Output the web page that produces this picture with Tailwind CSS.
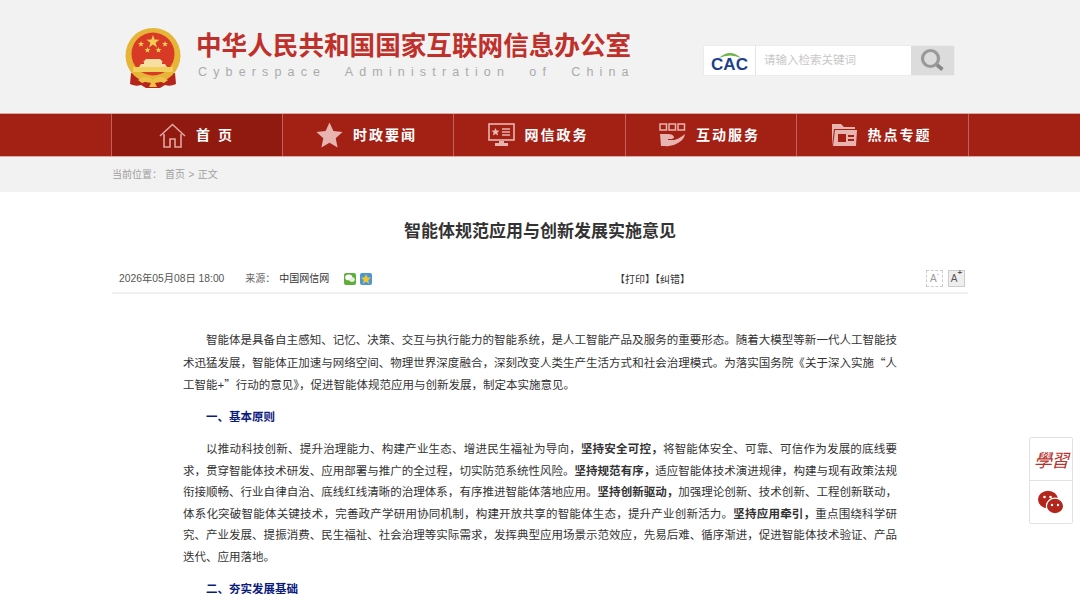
<!DOCTYPE html>
<html lang="zh-CN">
<head>
  <meta charset="UTF-8" />
  <title>智能体规范应用与创新发展实施意见</title>
  <script src="https://cdn.jsdelivr.net/npm/@tailwindcss/browser@4"></script>
</head>
<body class="relative h-[604px] overflow-hidden bg-white font-['Liberation_Sans','Noto_Sans_CJK_SC',sans-serif]">

  <!-- Header -->
  <header class="h-[113px] bg-[#f2f2f2] pl-[124px] pr-[126px] pt-[27px] flex">
    <svg width="58" height="62" viewBox="0 0 58 62" class="shrink-0">
      <path d="M7 46 L6 57 Q12 60 17 58 L22 61 L36 61 L41 58 Q46 60 52 57 L51 46 Z" fill="#b5251c" />
      <circle cx="29" cy="28.5" r="27.5" fill="#e6b436" />
      <circle cx="29" cy="27" r="21.5" fill="#d83a26" />
      <path d="M29 8 l1.6 4.6 4.9 .1 -3.9 3 1.4 4.7 -4 -2.8 -4 2.8 1.4 -4.7 -3.9 -3 4.9 -.1 Z" fill="#f5cf52" />
      <path d="M18 14 l.8 2 2.2 .1 -1.7 1.4 .6 2.1 -1.9 -1.2 -1.9 1.2 .6 -2.1 -1.7 -1.4 2.2 -.1 Z" fill="#f5cf52" transform="translate(-1 0)" />
      <path d="M40 14 l.8 2 2.2 .1 -1.7 1.4 .6 2.1 -1.9 -1.2 -1.9 1.2 .6 -2.1 -1.7 -1.4 2.2 -.1 Z" fill="#f5cf52" transform="translate(1 0)" />
      <path d="M24.500 20 l.8 2 2.200 .1 -1.700 1.400 .6 2.100 -1.900 -1.200 -1.900 1.200 .6 -2.100 -1.700 -1.400 2.200 -.1 Z" fill="#f5cf52" transform="translate(-1 0)" />
      <path d="M33.500 20 l.8 2 2.200 .1 -1.700 1.400 .6 2.100 -1.900 -1.200 -1.900 1.200 .6 -2.100 -1.700 -1.400 2.200 -.1 Z" fill="#f5cf52" transform="translate(1 0)" />
      <path d="M22 32 L36 32 L39 35 L19 35 Z M20 35 H38 V37 H20 Z M17 37 L41 37 L43 40 L15 40 Z" fill="#f6dfa0" />
      <path d="M9 40 H49 V45 H9 Z" fill="#f3cf5e" />
      <path d="M14 53 Q22 47 29 53 Q36 47 44 53 L40 56 Q34 53 31 56 L33 60 H25 L27 56 Q24 53 18 56 Z" fill="#eec04a" />
    </svg>
    <div class="ml-[14px] pt-[2px]">
      <div class="text-[25.6px] leading-[34px] font-bold text-[#c0302a] whitespace-nowrap">中华人民共和国国家互联网信息办公室</div>
      <div class="text-[12.5px] leading-[16px] mt-[1px] ml-[2px] text-[#aaaaaa] tracking-[6.15px] whitespace-pre">Cyberspace  Administration  of  China</div>
    </div>
    <div class="ml-auto mt-[19px] flex h-[29px] w-[250px] bg-white shadow-[0_0_1px_#ccc]">
      <div class="w-[52px] border-r border-[#e4e4e4] flex flex-col items-center justify-center">
        <svg width="38" height="7" viewBox="0 0 38 7"><path d="M8 7 Q19 -3 30 7 Q19 2 8 7 Z" fill="#6fb54a" /></svg>
        <span class="text-[17px] leading-[13px] font-bold text-[#1f3f8f]">CAC</span>
      </div>
      <div class="flex-1 pl-2 text-[11.5px] leading-[29px] text-[#c8c8c8]">请输入检索关键词</div>
      <div class="w-[43px] bg-[#dcdcdc] flex items-center justify-center">
        <svg width="25" height="25" viewBox="0 0 25 25" fill="none"><circle cx="10.500" cy="10.500" r="8" stroke="#999" stroke-width="3.200" /><path d="M17 17 L22.500 21.500" stroke="#888" stroke-width="3.600" /></svg>
      </div>
    </div>
  </header>

  <!-- Nav -->
  <nav class="h-[44px] bg-[#a32015] border-t border-b border-[#d9a9a4] px-[111px] text-white">
    <ul class="flex h-full w-[858px] text-[14px] font-bold">
      <li class="w-[172px] bg-[#911a10] border-x border-[#c2605a] flex items-center justify-center gap-[10px] pr-[3px]">
        <svg width="27" height="25" viewBox="0 0 27 25" fill="none" stroke="#e2a5a0" stroke-width="1.600"><path d="M1 13 L13.500 1.500 L26 13" /><path d="M5 11 V24 H11 V16 H16 V24 H22 V11" /></svg>
        <span class="tracking-[8px] mr-[-8px]">首页</span>
      </li>
      <li class="w-[171px] border-r border-[#c2605a] flex items-center justify-center gap-[10px] pr-[3px]">
        <svg width="27" height="26" viewBox="0 0 27 26"><path d="M13.500 0.500 L17.400 9 L26.500 10 L19.700 16.200 L21.600 25.500 L13.500 20.800 L5.400 25.500 L7.300 16.200 L0.500 10 L9.600 9 Z" fill="#e8b4af" /></svg>
        <span class="tracking-[2px]">时政要闻</span>
      </li>
      <li class="w-[172px] border-r border-[#c2605a] flex items-center justify-center gap-[10px] pr-[3px]">
        <svg width="27" height="24" viewBox="0 0 27 24" fill="none"><rect x="1" y="1" width="25" height="16" stroke="#e8b4af" stroke-width="1.600" /><path d="M7.500 5 l1.200 2.600 2.800 .2 -2.100 1.800 .7 2.800 -2.600 -1.500 -2.600 1.500 .7 -2.800 -2.100 -1.800 2.800 -.2 Z" fill="#e8b4af" /><path d="M14 6 H22 M14 9 H22 M14 12 H22" stroke="#e8b4af" stroke-width="1.400" /><path d="M11 18 H16 V20 H20 V23 H7 V20 H11 Z" fill="#e8b4af" /></svg>
        <span class="tracking-[2px]">网信政务</span>
      </li>
      <li class="w-[171px] border-r border-[#c2605a] flex items-center justify-center gap-[10px] pr-[3px]">
        <svg width="27" height="24" viewBox="0 0 27 24" fill="none"><rect x="1" y="1" width="6.500" height="6" stroke="#e8b4af" stroke-width="1.500" /><rect x="10" y="1" width="6.500" height="6" stroke="#e8b4af" stroke-width="1.500" /><rect x="19" y="1" width="6.500" height="6" stroke="#e8b4af" stroke-width="1.500" /><path d="M1 11 H9 Q14 11 15 14 Q15 16 11 16 H9 V17 H15 Q20 16 26 11 Q25 17 19 20 Q13 24 6 23 L2 23 Z" fill="#e8b4af" /></svg>
        <span class="tracking-[2px]">互动服务</span>
      </li>
      <li class="w-[172px] border-r border-[#c2605a] flex items-center justify-center gap-[10px] pr-[3px]">
        <svg width="27" height="24" viewBox="0 0 27 24"><path d="M1 1 H10 L13 4 H24 V6 H3 L1 23 Z" fill="#e8b4af" /><path fill-rule="evenodd" d="M4 7 H26 L25 23 H2 Z M7 11 V19 H15 V11 Z M17 12 V14 H23 V12 Z M17 16 V18 H23 V16 Z" fill="#e8b4af" /></svg>
        <span class="tracking-[2px]">热点专题</span>
      </li>
    </ul>
  </nav>

  <!-- Breadcrumb -->
  <div class="h-[35px] bg-[#f2f2f2] pl-[112px] flex items-center text-[10px] text-[#a0a0a0]">
    <span>当前位置：</span><span class="ml-[3px]">首页<span class="mx-[3.500px]">&gt;</span>正文</span>
  </div>

  <!-- Article -->
  <main class="px-[112px]">
    <h1 class="pt-[28px] text-center text-[17px] leading-[24px] font-bold text-[#333333]">智能体规范应用与创新发展实施意见</h1>

    <div class="relative mt-[21px] h-[29px] border-b-2 border-[#f0f0f0] pl-[7px] pr-[3px] flex items-center text-[10px] text-[#555555]">
      <span class="text-[10.3px]">2026年05月08日 18:00</span>
      <span class="ml-[21px] text-[#666666]">来源：</span>
      <span class="ml-[4px] text-[#333333]">中国网信网</span>
      <span class="ml-[15px] w-[12px] h-[12px] rounded-[2px] bg-[#5fae3c] flex items-center justify-center">
        <svg width="10" height="9" viewBox="0 0 9 8"><ellipse cx="3.400" cy="3" rx="3.200" ry="2.600" fill="#fff" /><ellipse cx="6.300" cy="5" rx="2.500" ry="2.100" fill="#e4f2dc" /></svg>
      </span>
      <span class="ml-[4px] w-[12px] h-[12px] rounded-[2px] bg-[#4a97d8] flex items-center justify-center">
        <svg width="10" height="10" viewBox="0 0 9 9"><path d="M4.500 0 L5.800 3 L9 3.300 L6.600 5.400 L7.300 8.700 L4.500 7 L1.700 8.700 L2.400 5.400 L0 3.300 L3.200 3 Z" fill="#f2c62f" /></svg>
      </span>
      <span class="absolute left-[503px] top-[7px] text-[#333333]">【打印】【纠错】</span>
      <span class="ml-auto w-[17px] h-[17px] border border-dashed border-[#cccccc] flex items-center justify-center text-[10px] text-[#999999]">A<sup class="text-[7px] -mt-[3px]">-</sup></span>
      <span class="ml-[5px] w-[17px] h-[17px] bg-[#eeeeee] border border-[#cccccc] flex items-center justify-center text-[10px] text-[#555555]">A<sup class="text-[8px] font-bold -mt-[3px]">+</sup></span>
    </div>

    <article class="mt-[36px] px-[71px] text-[11.5px] leading-[21.5px] text-[#333333] text-justify">
      <p class="indent-[23px] mb-[10.5px]">智能体是具备自主感知、记忆、决策、交互与执行能力的智能系统，是人工智能产品及服务的重要形态。随着大模型等新一代人工智能技术迅猛发展，智能体正加速与网络空间、物理世界深度融合，深刻改变人类生产生活方式和社会治理模式。为落实国务院《关于深入实施<span class="font-['Noto_Sans_CJK_SC']">“</span>人工智能+<span class="font-['Noto_Sans_CJK_SC']">”</span>行动的意见》，促进智能体规范应用与创新发展，制定本实施意见。</p>
      <p class="indent-[23px] mb-[10.5px] font-bold text-[#0b1a7e]">一、基本原则</p>
      <p class="indent-[23px] mb-[10.5px]">以推动科技创新、提升治理能力、构建产业生态、增进民生福祉为导向，<b>坚持安全可控，</b>将智能体安全、可靠、可信作为发展的底线要求，贯穿智能体技术研发、应用部署与推广的全过程，切实防范系统性风险。<b>坚持规范有序，</b>适应智能体技术演进规律，构建与现有政策法规衔接顺畅、行业自律自治、底线红线清晰的治理体系，有序推进智能体落地应用。<b>坚持创新驱动，</b>加强理论创新、技术创新、工程创新联动，体系化突破智能体关键技术，完善政产学研用协同机制，构建开放共享的智能体生态，提升产业创新活力。<b>坚持应用牵引，</b>重点围绕科学研究、产业发展、提振消费、民生福祉、社会治理等实际需求，发挥典型应用场景示范效应，先易后难、循序渐进，促进智能体技术验证、产品迭代、应用落地。</p>
      <p class="indent-[23px] font-bold text-[#0b1a7e]">二、夯实发展基础</p>
    </article>
  </main>

  <!-- Floating side buttons -->
  <aside class="absolute left-[1029px] top-[437px] w-[44px] h-[87px] bg-white border border-[#e2e2e2] rounded-[2px] flex flex-col">
    <div class="h-[43px] border-b border-[#e2e2e2] flex items-center justify-center text-[18px] italic text-[#b8322c] tracking-[-1px] font-['Noto_Sans_CJK_TC',sans-serif]">學習</div>
    <div class="flex-1 flex items-center justify-center">
      <svg width="26" height="25" viewBox="0 0 26 25"><ellipse cx="10" cy="9.500" rx="10" ry="8.800" fill="#b3261c" /><ellipse cx="17" cy="16" rx="8.600" ry="7.800" fill="#b3261c" stroke="#fff" stroke-width="1.200" /><circle cx="6.500" cy="7" r="1.300" fill="#fff" /><circle cx="12.500" cy="7" r="1.300" fill="#fff" /><circle cx="14" cy="15" r="1.200" fill="#fff" /><circle cx="20" cy="15" r="1.200" fill="#fff" /></svg>
    </div>
  </aside>
</body>
</html>
